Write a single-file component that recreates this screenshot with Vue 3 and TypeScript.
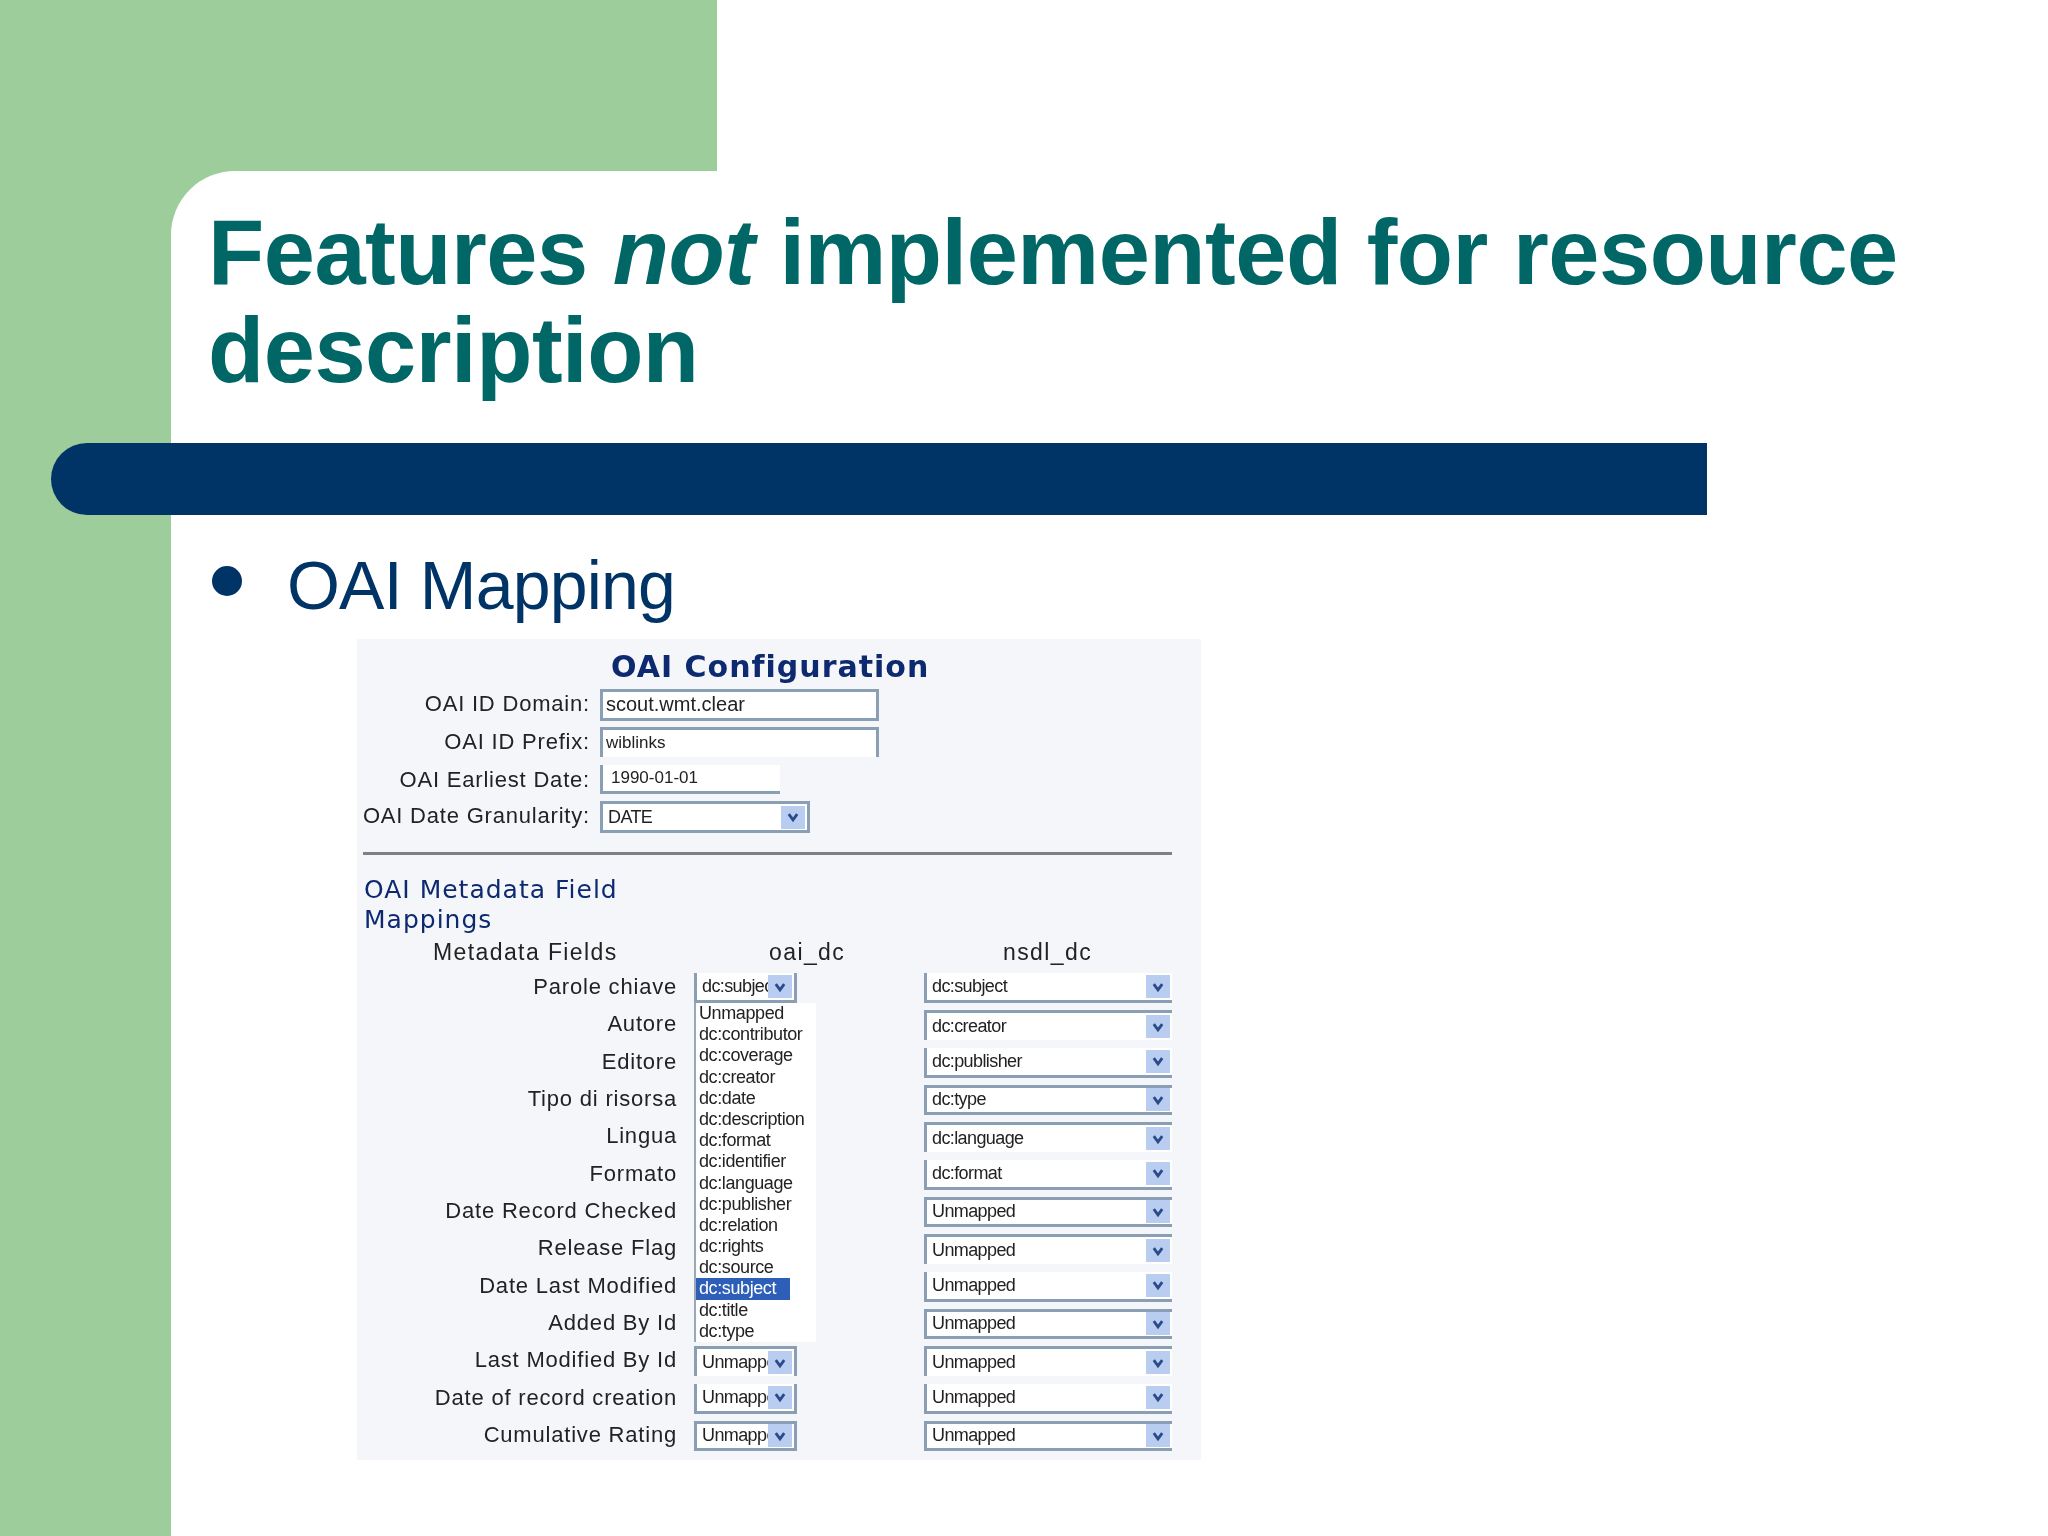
<script setup lang="ts">
type Edge = 'nt' | 'nb' | 'full'
interface Row { label: string; left?: string; leftEdge?: Edge; right: string; edge: Edge }

const topFields = [
  { label: 'OAI ID Domain:', value: 'scout.wmt.clear', cls: 'f1' },
  { label: 'OAI ID Prefix:', value: 'wiblinks', cls: 'f2' },
  { label: 'OAI Earliest Date:', value: '1990-01-01', cls: 'f3' },
]

const rows: Row[] = [
  { label: 'Parole chiave', left: 'dc:subject', leftEdge: 'nt', right: 'dc:subject', edge: 'nt' },
  { label: 'Autore', right: 'dc:creator', edge: 'nb' },
  { label: 'Editore', right: 'dc:publisher', edge: 'nt' },
  { label: 'Tipo di risorsa', right: 'dc:type', edge: 'full' },
  { label: 'Lingua', right: 'dc:language', edge: 'nb' },
  { label: 'Formato', right: 'dc:format', edge: 'nt' },
  { label: 'Date Record Checked', right: 'Unmapped', edge: 'full' },
  { label: 'Release Flag', right: 'Unmapped', edge: 'nb' },
  { label: 'Date Last Modified', right: 'Unmapped', edge: 'nt' },
  { label: 'Added By Id', right: 'Unmapped', edge: 'full' },
  { label: 'Last Modified By Id', left: 'Unmapped', leftEdge: 'nb', right: 'Unmapped', edge: 'nb' },
  { label: 'Date of record creation', left: 'Unmapped', leftEdge: 'nt', right: 'Unmapped', edge: 'nt' },
  { label: 'Cumulative Rating', left: 'Unmapped', leftEdge: 'full', right: 'Unmapped', edge: 'full' },
]

const options = [
  'Unmapped', 'dc:contributor', 'dc:coverage', 'dc:creator', 'dc:date', 'dc:description',
  'dc:format', 'dc:identifier', 'dc:language', 'dc:publisher', 'dc:relation', 'dc:rights',
  'dc:source', 'dc:subject', 'dc:title', 'dc:type',
]
</script>

<template>
  <div class="slide">
    <div class="top"></div>
    <div class="lower">
      <main class="main">
        <h1 class="title">Features <em>not</em> implemented for resource description</h1>
        <div class="bar"></div>
        <div class="bullet"><span class="dot"></span><span>OAI Mapping</span></div>

        <section class="panel">
          <h2 class="cfg">OAI Configuration</h2>
          <div class="fields">
            <template v-for="f in topFields" :key="f.label">
              <span class="lab">{{ f.label }}</span>
              <div class="input" :class="f.cls">{{ f.value }}</div>
            </template>
            <span class="lab">OAI Date Granularity:</span>
            <div class="sel gran">
              <span class="val">DATE</span>
              <span class="btn"><svg viewBox="0 0 10 10"><path d="M2 3l3 4 3-4" /></svg></span>
            </div>
          </div>
          <div class="rule"></div>
          <h3 class="meta">OAI Metadata Field<br />Mappings</h3>
          <div class="map">
            <div class="head hl">Metadata Fields</div>
            <div class="head h1c">oai_dc</div>
            <div class="head h2c">nsdl_dc</div>
            <template v-for="(r, i) in rows" :key="r.label">
              <span class="rlab">{{ r.label }}</span>
              <div class="lcell">
                <div v-if="r.left" class="sel narrow" :class="r.leftEdge">
                  <span class="val">{{ r.left }}</span>
                  <span class="btn"><svg viewBox="0 0 10 10"><path d="M2 3l3 4 3-4" /></svg></span>
                </div>
                <ul v-if="i === 0" class="menu">
                  <li v-for="o in options" :key="o" :class="{ on: o === 'dc:subject' }">{{ o }}</li>
                </ul>
              </div>
              <div class="sel wide" :class="r.edge">
                <span class="val">{{ r.right }}</span>
                <span class="btn"><svg viewBox="0 0 10 10"><path d="M2 3l3 4 3-4" /></svg></span>
              </div>
            </template>
          </div>
        </section>
      </main>
    </div>
  </div>
</template>

<style scoped>
.slide {
  width: 2048px;
  height: 1536px;
  display: flex;
  flex-direction: column;
  background: #fff;
  overflow: hidden;
  font-family: "Liberation Sans", Arial, sans-serif;
}
.top { width: 717px; height: 171px; background: #9ccd9b; flex: none; }
.lower { flex: 1; background: #9ccd9b; padding-left: 171px; display: flex; min-height: 0; }
.main {
  flex: 1;
  background: #fff;
  border-top-left-radius: 64px;
  padding-top: 32px;
}
.title {
  margin: 0 0 0 37px;
  width: 1780px;
  font-size: 92px;
  line-height: 98px;
  font-weight: 700;
  color: #006666;
  letter-spacing: -0.48px;
}
.title em { font-style: italic; }
.bar {
  margin: 44px 0 0 -120px;
  width: 1656px;
  height: 72px;
  background: #003366;
  border-radius: 36px 0 0 36px / 36px 0 0 36px;
}
.bullet {
  display: flex;
  align-items: center;
  margin: 31px 0 0 41px;
  height: 78px;
  font-size: 68px;
  letter-spacing: -0.8px;
  color: #003366;
}
.dot { width: 30px; height: 30px; border-radius: 50%; background: #003366; margin-right: 45px; margin-top: -8px; }

.panel {
  margin: 15px 0 0 186px;
  width: 844px;
  height: 821px;
  background: #f5f6fa;
  color: #111;
  filter: blur(0.75px);
}
.cfg {
  margin: 0;
  padding: 11px 0 0 254px;
  height: 50px;
  box-sizing: border-box;
  font-family: "DejaVu Sans", sans-serif;
  font-size: 30px;
  letter-spacing: 1px;
  line-height: 34px;
  font-weight: 700;
  color: #0d2a70;
  white-space: nowrap;
}
.fields {
  display: grid;
  grid-template-columns: 233px 1fr;
  column-gap: 10px;
  grid-template-rows: 38px 38px 36px 32px;
  align-items: start;
}
.lab, .rlab {
  text-align: right;
  font-size: 22px;
  letter-spacing: 0.8px;
  line-height: 30px;
  white-space: nowrap;
  color: #222;
}
.input {
  box-sizing: border-box;
  background: #fff;
  border: 3px solid #8b9fb4;
  font-size: 20px;
  padding-left: 3px;
  color: #222;
}
.f1 { width: 279px; height: 32px; line-height: 24px; }
.f2 { width: 279px; height: 30px; line-height: 26px; border-bottom: 0; font-size: 17px; }
.f3 { width: 180px; height: 29px; line-height: 26px; border-top: 0; border-right: 0; padding-left: 8px; font-size: 17px; }
.sel {
  box-sizing: border-box;
  display: flex;
  align-items: center;
  background: #fff;
  border: 3px solid #8b9fb4;
  height: 30px;
  overflow: hidden;
  font-size: 18px;
  letter-spacing: -0.6px;
  color: #222;
}
.sel.nt { border-top: 0; }
.sel.nb { border-bottom: 0; }
.val { flex: 1; min-width: 0; padding-left: 5px; overflow: hidden; white-space: nowrap; }
.btn {
  flex: none;
  width: 24px;
  height: 23px;
  margin-right: 2px;
  background: #b9cdf0;
  display: flex;
  align-items: center;
  justify-content: center;
}
.btn svg { width: 14px; height: 14px; }
.btn path { fill: none; stroke: #2b4a8c; stroke-width: 2; }
.gran { width: 210px; height: 32px; }
.narrow { width: 103px; }
.wide { width: 248px; border-right: 0; }

.rule { margin: 19px 0 0 6px; width: 809px; height: 3px; background: #808080; }
.meta {
  margin: 20px 0 0 7px;
  font-family: "DejaVu Sans", sans-serif;
  font-size: 25px;
  letter-spacing: 1px;
  line-height: 30px;
  font-weight: 400;
  color: #0d2a70;
  white-space: nowrap;
}
.map {
  display: grid;
  grid-template-columns: 320px 247px 248px;
  grid-template-rows: 34px;
  grid-auto-rows: 37.33px;
  align-items: start;
  padding-top: 4px;
}
.head { font-size: 23px; line-height: 26px; letter-spacing: 1.4px; color: #222; white-space: nowrap; }
.hl { padding-left: 76px; }
.h1c { padding-left: 92px; }
.h2c { padding-left: 79px; }
.map > .rlab { line-height: 28px; }
.lcell { position: relative; margin-left: 17px; height: 30px; }
.menu {
  position: absolute;
  left: 0;
  top: 30px;
  width: 122px;
  margin: 0;
  padding: 0;
  list-style: none;
  background: #fff;
  border-left: 2px solid #9aa8b8;
  box-sizing: border-box;
  z-index: 2;
  font-size: 18px;
  letter-spacing: -0.4px;
  color: #222;
}
.menu li { height: 21.2px; line-height: 21px; padding-left: 3px; width: 94px; box-sizing: border-box; white-space: nowrap; }
.menu li.on { background: #2e5fb8; color: #fff; }
</style>
